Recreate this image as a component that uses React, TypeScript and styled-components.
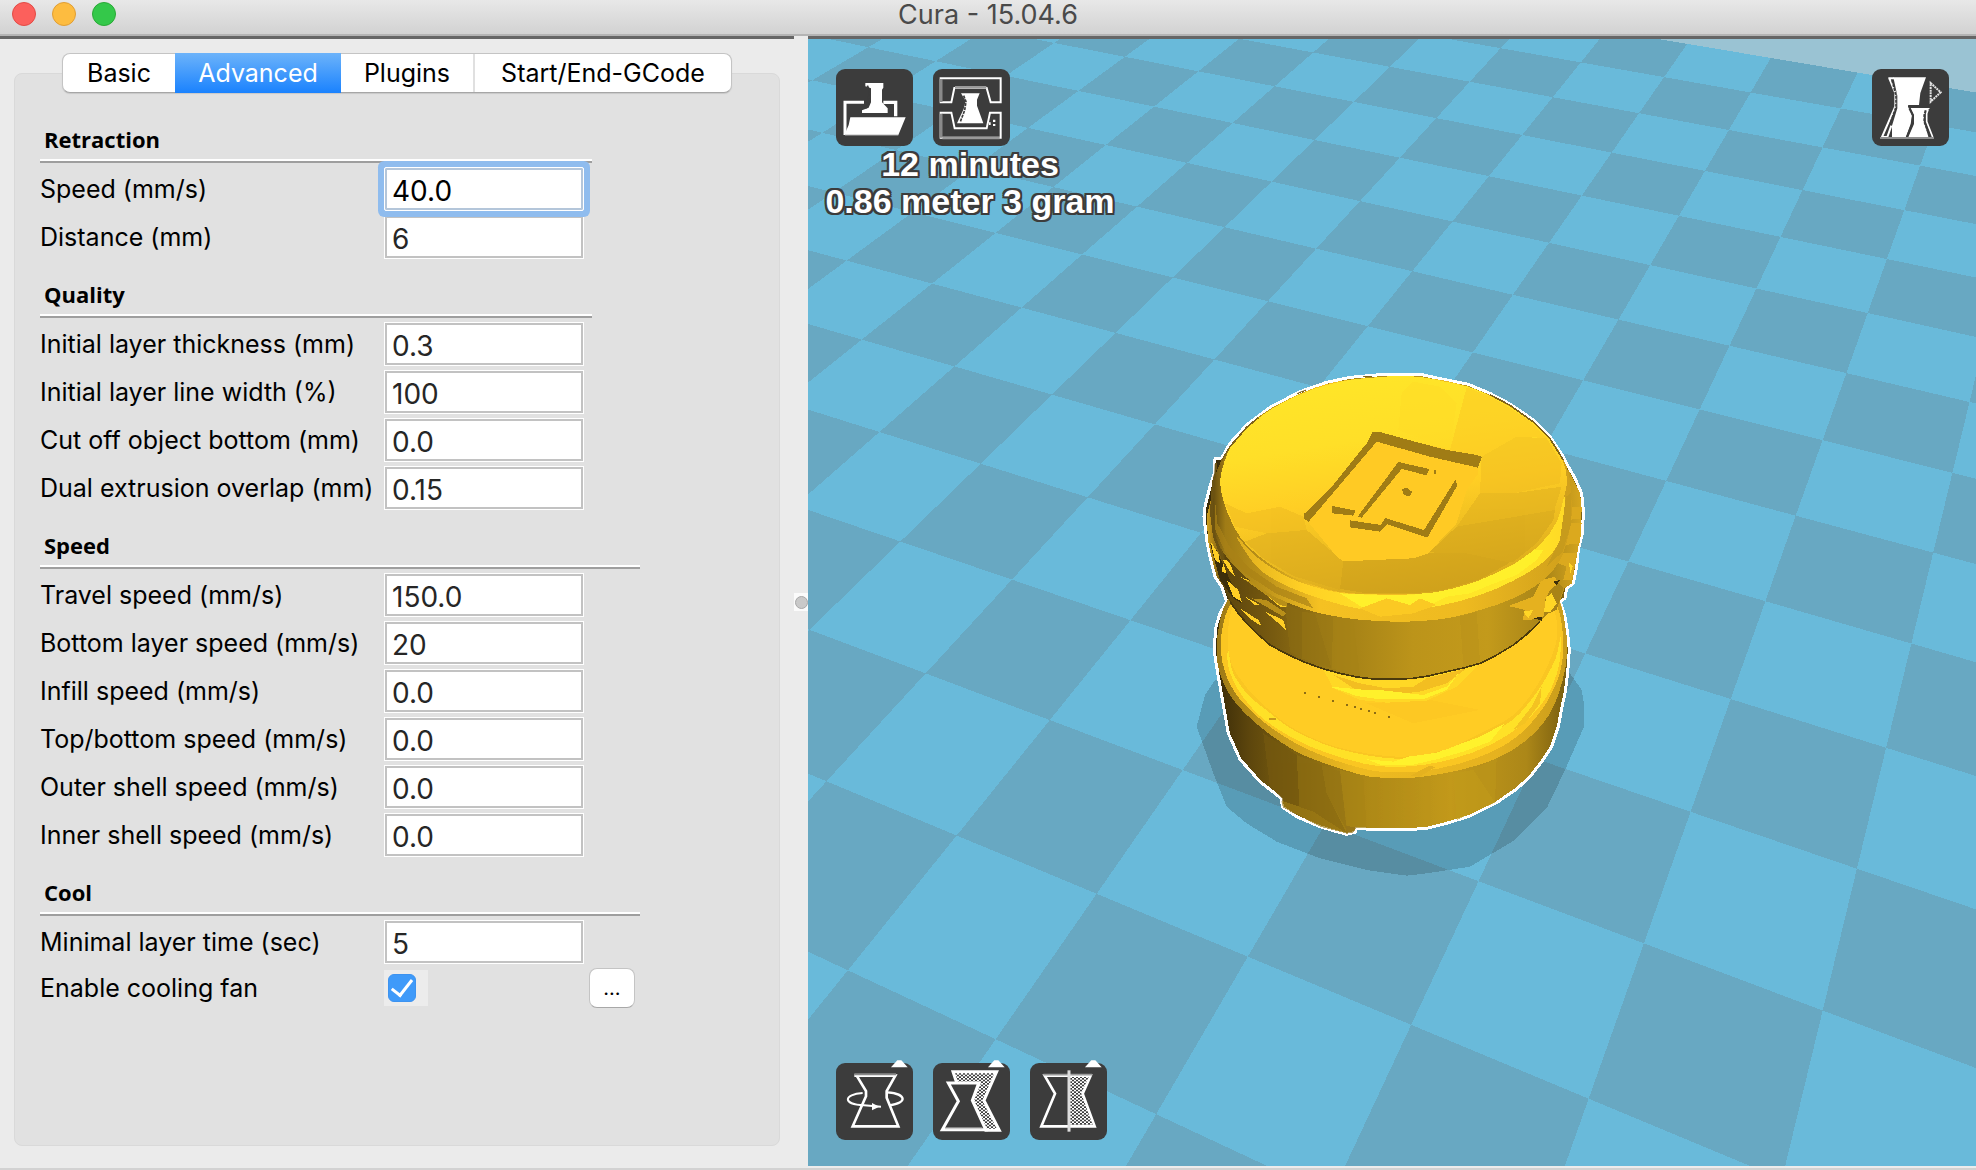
import React, { useId, useState } from "react";
import styled, { createGlobalStyle, css } from "styled-components";

const GlobalStyle = createGlobalStyle`
  * { box-sizing: border-box; }
  body {
    margin: 0;
    background: #ebebeb;
    color: #000;
    font-family: Inter, Roboto, "Liberation Sans", sans-serif;
    font-size: 25px;
  }
  button, input { font: inherit; color: inherit; }
`;

/* ---------- window frame ---------- */

const Window = styled.div`
  display: flex;
  flex-direction: column;
  height: 100vh;
`;

const TitleBar = styled.header`
  display: grid;
  grid-template-columns: 1fr auto 1fr;
  height: 36px;
  padding: 0 12px;
  background: linear-gradient(#e8e8e8, #d2d2d2);
  border-bottom: 2px solid #b4b4b4;
`;

const Lights = styled.div`
  display: flex;
  gap: 16px;
  padding-top: 2px;
`;

const Light = styled.button<{ $fill: string; $edge: string }>`
  width: 24px;
  height: 24px;
  padding: 0;
  border: 1px solid ${(p) => p.$edge};
  border-radius: 50%;
  background: ${(p) => p.$fill};
`;

const Title = styled.h1`
  margin: 0;
  font-size: 27px;
  font-weight: 400;
  line-height: 30px;
  color: #4a4a4a;
`;

const Body = styled.div`
  flex: 1;
  min-height: 0;
  display: grid;
  grid-template-columns: 794px 14px minmax(0, 1fr);
  border-bottom: 2px solid #d2d2d2;
`;

const Pane = styled.div`
  display: flex;
  flex-direction: column;
  padding: 14px;
  padding-bottom: 22px;
  border-top: 3px solid #666;
`;

const Splitter = styled.div`
  display: grid;
  place-items: center;
`;

const Grip = styled.span`
  display: grid;
  place-items: center;
  width: 14px;
  height: 18px;
  background: #fbfbfb;
  &::after {
    content: "";
    width: 11px;
    height: 11px;
    border: 1px solid #a8a8a8;
    border-radius: 50%;
    background: #c9c9c9;
  }
`;

/* ---------- settings panel ---------- */

const Tabs = styled.div`
  display: flex;
  align-self: center;
  height: 40px;
  margin-bottom: -20px;
  border: 1px solid #c4c4c4;
  border-bottom-color: #a6a6a6;
  border-radius: 8px;
  background: #fff;
  box-shadow: 0 1px 1px #c8c8c8;
  z-index: 1;
`;

const Tab = styled.button<{ $active: boolean; $width: number }>`
  width: ${(p) => p.$width}px;
  padding: 0;
  border: 0;
  background: transparent;
  & + button { border-left: 2px solid #e0e0e0; }
  ${(p) =>
    p.$active &&
    css`
      &&& {
        margin: -1px 0;
        border-left: 0;
        color: #fff;
        background: linear-gradient(#6cb3fa, #1a82fe);
      }
      && + button { border-left: 0; }
    `}
`;

const Group = styled.form`
  flex: 1;
  display: flex;
  flex-direction: column;
  gap: 21px;
  padding: 51px 25px 0;
  border: 1px solid #d9d9d9;
  border-radius: 8px;
  background: #e1e1e1;
`;

const Section = styled.section<{ $wide?: boolean }>`
  display: flex;
  flex-direction: column;
  gap: 4px;
  width: ${(p) => (p.$wide ? 600 : 552)}px;
`;

const Heading = styled.h2`
  margin: 0;
  padding: 0 0 8px 4px;
  font-family: "Open Sans", "Noto Sans", sans-serif;
  font-size: 22px;
  font-weight: 700;
  line-height: 28px;
  border-bottom: 2px solid #9e9e9e;
  box-shadow: inset 0 -2px #fff;
`;

const Row = styled.div<{ $short?: boolean }>`
  display: grid;
  grid-template-columns: 344px 200px 1fr;
  align-items: center;
  height: ${(p) => (p.$short ? 40 : 44)}px;
`;

const Label = styled.label`
  white-space: nowrap;
`;

const Field = styled.input`
  width: 100%;
  height: 44px;
  padding: 4px 7px 0;
  border: 1px solid #fff;
  border-radius: 0;
  background: #fff;
  color: #262626;
  font-size: 28px;
  outline: none;
  box-shadow: inset 0 0 0 2px #c2c2c2;
  &:focus {
    position: relative;
    color: #000;
    border-radius: 2px;
    box-shadow: inset 0 0 0 2px #b4c6da, 0 0 0 6px #8fbcee;
  }
`;

const CheckCell = styled.span`
  display: flex;
  align-items: center;
  width: 44px;
  height: 36px;
  padding-left: 4px;
  background: #ececec;
`;

const Check = styled.input`
  appearance: none;
  display: grid;
  place-items: center;
  width: 28px;
  height: 28px;
  margin: 0;
  border: 1px solid #b8b8b8;
  border-radius: 6px;
  background: #fff;
  &:checked {
    border-color: #3d93f0;
    background: #3f9af9;
  }
  &:checked::after {
    content: "";
    width: 9px;
    height: 18px;
    margin-bottom: 5px;
    border: solid #fff;
    border-width: 0 3px 3px 0;
    transform: rotate(38deg);
  }
`;

const MoreButton = styled.button`
  width: 46px;
  height: 40px;
  margin-left: 5px;
  padding: 0;
  border: 1px solid #c4c4c4;
  border-bottom-color: #a8a8a8;
  border-radius: 8px;
  background: #fff;
  font-size: 20px;
`;

/* ---------- 3D view ---------- */

const View = styled.main`
  position: relative;
  overflow: hidden;
  border-top: 3px solid #666;
  border-bottom: 2px solid #ececec;
  background: #9ac3d3;
`;

const Scene = styled.svg`
  position: absolute;
  inset: 0;
  width: 100%;
  height: 100%;
`;

const Overlay = styled.div`
  position: relative;
  display: flex;
  flex-direction: column;
  justify-content: space-between;
  height: 100%;
  padding: 30px 27px 26px 28px;
`;

const Bar = styled.div`
  display: flex;
  justify-content: space-between;
`;

const Tools = styled.div`
  display: flex;
  gap: 20px;
`;

const ToolButton = styled.button`
  width: 77px;
  height: 77px;
  padding: 0;
  border: 0;
  border-radius: 9px;
  background: #3c3c3c;
  svg {
    display: block;
    width: 100%;
    height: 100%;
    overflow: visible;
  }
`;

const Estimate = styled.p`
  width: 290px;
  margin: 0 0 0 -11px;
  font-family: "Liberation Sans", Arial, sans-serif;
  font-size: 34px;
  font-weight: 700;
  line-height: 37px;
  text-align: center;
  white-space: nowrap;
  color: #fff;
  text-shadow: 2px 0 #3c3c3c, -2px 0 #3c3c3c, 0 2px #3c3c3c, 0 -2px #3c3c3c,
    2px 2px #3c3c3c, -2px 2px #3c3c3c, 2px -2px #3c3c3c, -2px -2px #3c3c3c;
`;

/* ---------- floor: checkerboard in perspective ---------- */

const ORIGIN = [1588.7, 1098.7];
const VANISH_I = [2252, -769];
const VANISH_J = [-2735, -702];

function project(i: number, j: number) {
  const a = i * 0.09076;
  const b = (j - 5) * -0.0428;
  const w = 1 + a + b;
  const x = (ORIGIN[0] + a * VANISH_I[0] + b * VANISH_J[0]) / w;
  const y = (ORIGIN[1] + a * VANISH_I[1] + b * VANISH_J[1]) / w;
  return `${x.toFixed(1)} ${y.toFixed(1)}`;
}

function quad(i0: number, i1: number, j0: number, j1: number) {
  return `M${project(i0, j0)}L${project(i1, j0)}L${project(i1, j1)}L${project(i0, j1)}Z`;
}

function darkTiles() {
  let d = "";
  for (let i = -4; i < 13; i++) {
    for (let j = -16; j < 9; j++) {
      if ((i + j) & 1) d += quad(i, i + 1, j, j + 1);
    }
  }
  return d;
}

/* Rounds a closed polygon into a curve that still passes through each of its corners. */
function smooth(polygon: string) {
  const n = (polygon.match(/-?\d+/g) || []).map(Number);
  const count = n.length / 2;
  const at = (k: number) => {
    const m = (k + count) % count;
    return [n[m * 2], n[m * 2 + 1]];
  };
  let d = `M${at(0).join(" ")}`;
  for (let k = 0; k < count; k++) {
    const [p, a, b, q] = [at(k - 1), at(k), at(k + 1), at(k + 2)];
    d += `C${(a[0] + (b[0] - p[0]) / 6).toFixed(1)} ${(a[1] + (b[1] - p[1]) / 6).toFixed(1)} ${(b[0] - (q[0] - a[0]) / 6).toFixed(1)} ${(b[1] - (q[1] - a[1]) / 6).toFixed(1)} ${b[0]} ${b[1]}`;
  }
  return d + "Z";
}

const SILHOUETTE =
  "M105 326L125 325L150 280L200 225L270 172L360 125L440 97L510 82L590 75L730 75L790 88L865 103L930 130L990 162L1060 210L1110 260L1150 320L1165 350L1185 385L1205 430L1210 480L1208 545L1195 600L1190 650L1180 700L1160 715L1155 745L1140 755L1155 800L1163 850L1168 900L1163 970L1155 1030L1145 1075L1135 1130L1115 1190L1085 1235L1050 1280L1010 1317L950 1358L870 1398L800 1420L740 1435L670 1440L600 1440L530 1435L525 1447L500 1453L470 1445L420 1430L350 1400L308 1372L303 1345L240 1295L180 1228L145 1150L130 1065L115 980L102 900L108 830L120 790L140 755L125 710L105 680L90 620L80 570L72 500L75 470L90 410L103 370Z";

const LOWER_RIM = smooth(
  "M140 755L118 820L110 900L120 970L160 1050L240 1130L340 1200L420 1235L500 1262L570 1280L645 1284L720 1281L840 1260L950 1225L1040 1170L1110 1090L1148 990L1162 900L1156 830L1140 755L1110 730L1000 730L300 730L180 730"
);

const LOWER_FACE = smooth(
  "M148 770L128 830L122 900L138 975L178 1045L250 1115L340 1176L430 1218L520 1248L610 1266L720 1264L830 1243L940 1203L1025 1148L1092 1070L1136 980L1150 900L1146 830L1132 770L1100 735L1000 730L300 730L185 735"
);

const LOWER_BAND = smooth(
  "M145 900L160 970L205 1035L265 1085L340 1140L460 1192L600 1222L700 1224L800 1206L900 1164L1000 1108L1075 1020L1125 930L1142 860L1136 950L1100 1040L1030 1120L930 1185L820 1226L700 1248L580 1246L450 1212L340 1165L240 1098L175 1020L145 950"
);

const LOWER_FLAT = smooth(
  "M158 770L144 850L154 940L202 1015L262 1075L340 1135L460 1188L600 1216L700 1218L800 1198L890 1155L1000 1095L1075 1000L1122 900L1132 830L1118 770L1090 740L1000 730L300 730L190 740"
);

const UPPER_SIDE =
  "M95 440L80 500L84 570L94 620L110 680L130 710L150 755L175 790L200 820L235 854L270 885L320 912L370 935L425 955L480 970L530 981L580 987L640 988L700 985L750 977L800 965L850 954L900 940L950 915L1000 885L1040 853L1080 815L1140 755L1153 715L1176 700L1186 645L1200 560L1205 480L1200 430L1165 360Z";

const UPPER_RIM = smooth(
  "M125 330L97 420L94 490L104 550L132 610L190 675L280 738L390 782L490 803L580 812L680 815L800 805L900 780L1000 745L1090 690L1145 620L1172 520L1174 440L1160 350L1110 265L1030 192L930 136L830 100L730 84L590 82L440 102L300 160L200 230"
);

const UPPER_TOP = smooth(
  "M122 380L127 440L150 505L185 568L245 625L330 678L430 715L490 727L560 732L700 732L790 722L900 690L1000 642L1080 584L1130 515L1152 440L1161 390L1148 330L1108 266L1060 216L990 170L930 138L865 110L790 94L730 82L660 78L590 82L510 90L440 105L360 133L270 180L200 234L150 294"
);

const UPPER_BAND = smooth(
  "M170 560L235 625L330 684L430 718L490 729L560 733L700 733L790 723L900 691L1000 643L1080 584L1130 515L1152 440L1158 500L1138 575L1090 636L1000 692L900 735L790 765L680 782L560 780L440 752L330 712L235 655"
);

function Model() {
  return (
    <g transform="translate(1180 350) scale(0.33333)" shapeRendering="crispEdges">
      <path
        d="M105 990L75 1035L50 1130L75 1200L100 1270L140 1370L200 1420L290 1475L420 1525L560 1560L680 1577L740 1570L870 1550L1005 1470L1100 1375L1155 1260L1212 1130L1212 1060L1205 1020L1170 970Z"
        fill="#000"
        opacity="0.16"
      />
      <path d={SILHOUETTE} fill="url(#sideLow)" stroke="#fff" strokeWidth="9" />
      <g clipPath="url(#outline)">
        {/* lower drum facets */}
        <g opacity="0.7">
          <path d="M250 1150L270 1310L305 1345L308 1372L360 1400L350 1215Z" fill="#75590f" />
          <path d="M350 1215L360 1400L500 1450L440 1330L425 1245Z" fill="#8b6c12" />
          <path d="M425 1245L440 1330L500 1440L480 1265Z" fill="#967615" />
          <path d="M480 1260L500 1430L560 1435L550 1280Z" fill="#a98516" />
          <path d="M300 1350L400 1385L500 1450L420 1430L310 1372Z" fill="#9c7a15" />
          <path d="M498 1428L530 1432L520 1447L498 1452Z" fill="#94731a" />
          <path d="M820 1270L830 1410L945 1358L880 1260Z" fill="#c19a1b" />
          <path d="M880 1260L945 1358L950 1225Z" fill="#bb951a" />
        </g>
        {/* lower top face */}
        <path d={LOWER_RIM} fill="url(#rimLow)" />
        <path d={LOWER_FACE} fill="#fac622" />
        <path d={LOWER_BAND} fill="#ffe127" />
        <path
          d="M560 1228L640 1235L700 1215L770 1208L900 1160L975 1120L930 1175L850 1205L770 1228L690 1246L600 1244Z"
          fill="#fff22c"
        />
        <path d={LOWER_FLAT} fill="#ffcc24" />
        <path d="M700 1120L900 1080L750 1050L560 1060Z" fill="#fdc823" />
        <path d="M420 940L460 1015L540 1050L620 1058L740 1052L830 1010L900 940L700 990L560 985Z" fill="#ffd826" />
        <path d="M460 975L520 1015L620 1035L720 1025L800 1000L860 955L740 985L700 1010L620 1015L540 1000Z" fill="#f3be21" />
        <path d="M450 1010L560 1020L600 1020L730 1035L800 1010L835 970L800 1020L730 1048L600 1048L530 1038Z" fill="#fff12b" />
        <path d="M1055 1070L1085 1010L1080 1060L1035 1120L1000 1140Z" fill="#f4c322" />
        <path d="M690 1278L750 1246L765 1252L720 1280Z" fill="#e5b21f" />
        <path d="M373 1028h6m36 12h6m36 12h6m36 12h6m18 6h6m12 6h6m18 6h6m12 6h6m36 12h6" stroke="#8d6d14" strokeWidth="6" fill="none" />
        <path d="M268 1106h20" stroke="#c9991c" strokeWidth="6" />

        {/* upper drum side */}
        <path d={UPPER_SIDE} fill="url(#sideUp)" />
        <path
          d="M150 755L175 790L200 820L235 854L270 885L320 912L370 935L425 955L480 970L530 981L580 987L640 988L700 985L750 977L800 965L850 954L900 940L950 915L1000 885L1040 853L1080 815"
          fill="none"
          stroke="#4a390c"
          strokeWidth="5"
        />
        <g opacity="0.6">
          <path d="M315 760L330 905L365 925L365 785Z" fill="#8b6c12" />
          <path d="M365 785L365 925L455 955L405 790Z" fill="#967514" />
          <path d="M405 790L455 955L460 800Z" fill="#9d7b15" />
          <path d="M460 800L455 955L540 978L520 808Z" fill="#a78316" />
          <path d="M840 800L850 950L900 935L890 785Z" fill="#bb931a" />
        </g>
        {/* relief on the left and right of the drum */}
        <path d="M90 580L110 600L150 690L185 760L160 745L120 690Z" fill="#3d2f0b" />
        <path d="M92 575L115 610L120 640L105 630ZM120 615L150 640L165 680L150 665ZM130 640L140 670L125 665ZM140 690L175 720L185 755L160 740ZM180 680L240 705L320 770L300 770L240 720ZM195 740L240 765L225 765ZM180 775L235 810L245 828L215 810ZM255 785L310 810L320 845L290 815Z" fill="#ffce24" />
        <path d="M195 690L300 765L320 770L320 740L240 700ZM215 745L310 800L320 790L260 750Z" fill="#b88f19" />
        <path d="M1150 470L1205 470L1203 505L1165 510ZM1160 520L1205 518L1200 580L1155 585ZM1140 608L1190 608L1176 690L1150 690L1160 650L1135 640Z" fill="#dba91e" />
        <path d="M985 768L1060 740L1085 690L1125 680L1135 705L1105 735L1090 800L1050 810L1028 810L1035 780Z" fill="#e5b11f" />
        <path d="M1095 750L1110 720L1135 700L1150 715L1130 780L1095 795Z" fill="#a98317" />
        <path d="M1098 742L1115 730L1130 760L1112 785L1092 785ZM1168 640L1178 650L1170 675ZM1030 785L1060 780L1045 805Z" fill="#ffd626" />
        <path d="M1120 695L1140 690L1130 705ZM1060 805L1085 800L1085 812Z" fill="#3d2f0b" />

        {/* rounded rim */}
        <path d={UPPER_RIM} fill="url(#rim)" />
        <path d="M104 440L112 520L150 592L210 655L290 710L380 745L400 775L290 732L195 670L135 605L106 540Z" fill="#a98217" opacity="0.7" />
        <path d={UPPER_BAND} fill="url(#band)" />
        <path d="M480 730L560 734L700 734L790 722L900 690L1000 645L1060 600L1090 600L1070 630L1010 675L930 705L870 730L800 740L760 760L680 765L620 745L560 780Z" fill="#fff02b" />
        <path d="M540 775L620 745L690 765L720 745L770 765L700 790L600 800Z" fill="#fbc923" />
        <path d="M1158 440L1172 430L1174 520L1148 605L1100 650L1140 570Z" fill="#c79b1c" />

        {/* top face with faint facets */}
        <path d={UPPER_TOP} fill="url(#top)" />
        <g opacity="0.5">
          <path d="M665 130L655 240L810 300L830 160L780 110L700 95Z" fill="#ffdb26" />
          <path d="M860 112L810 300L905 320L1040 260L1100 265L1050 214L990 174L930 140Z" fill="#fbc823" />
          <path d="M905 320L900 430L1000 430L1140 400L1145 340L1100 265L1010 260Z" fill="#f0bc20" />
          <path d="M900 430L830 530L1000 520L1120 490L1145 410L1000 430Z" fill="#deae1e" />
          <path d="M830 530L750 605L900 640L1000 636L1070 580L1120 510L1125 480Z" fill="#cfa11c" />
          <path d="M490 634L470 715L560 730L700 730L790 720L900 688L990 638L860 610L745 610Z" fill="#c99c1b" />
          <path d="M380 540L260 550L195 575L250 625L340 678L480 720L490 634Z" fill="#d9a91e" />
          <path d="M135 460L165 530L260 550L380 540L370 500L300 470L200 490Z" fill="#edb920" />
          <path d="M640 650L760 665L720 700L600 725L490 720Z" fill="#c99c1b" />
        </g>
        <path d="M380 510L470 620L490 634L700 625L745 610L830 520L860 420L895 370L890 320L600 250L380 490Z" fill="#ffca24" />

        {/* engraved mark */}
        <g fill="#a07c15">
          <path d="M577 246L600 246L690 271L800 300L880 313L906 320L894 353L750 320L590 275L385 516L372 505L372 492L450 417L560 280Z" />
          <path d="M655 336L748 357L740 376L665 357L545 503L533 500Z" />
          <path d="M762 360h6v12h-6zM680 413L696 425L690 438L672 436L666 418Z" />
          <path d="M456 468L526 482L520 497L456 490ZM510 511L603 525L615 504L732 540L826 390L833 405L742 563L622 523L600 545L510 532Z" />
        </g>
        {/* dark edge along the outline */}
        <path d="M125 332L150 290L200 232L235 203M350 130L378 120M548 80H575M930 134L990 166L1060 216L1110 266L1150 330" fill="none" stroke="#80631a" strokeWidth="5" />
        <path d="M108 340L98 420L94 490L103 560L130 630" fill="none" stroke="#6b5212" strokeWidth="8" />
      </g>
    </g>
  );
}

function ViewScene() {
  return (
    <Scene viewBox="808 39 1168 1127" preserveAspectRatio="xMidYMid slice" aria-hidden="true">
      <defs>
        <clipPath id="outline">
          <path d={SILHOUETTE} />
        </clipPath>
        <linearGradient id="sideLow" x1="0" x2="1" y1="0" y2="0">
          <stop offset="0.03" stopColor="#3a2b08" />
          <stop offset="0.12" stopColor="#5d460d" />
          <stop offset="0.25" stopColor="#80630f" />
          <stop offset="0.42" stopColor="#ad8817" />
          <stop offset="0.65" stopColor="#c2991b" />
          <stop offset="0.85" stopColor="#ac8718" />
          <stop offset="0.95" stopColor="#7c6010" />
        </linearGradient>
        <linearGradient id="sideUp" x1="0" x2="1" y1="0" y2="0">
          <stop offset="0" stopColor="#d2a11d" />
          <stop offset="0.05" stopColor="#5c450d" />
          <stop offset="0.18" stopColor="#785b10" />
          <stop offset="0.35" stopColor="#a27f16" />
          <stop offset="0.55" stopColor="#bc941a" />
          <stop offset="0.75" stopColor="#c39a1b" />
          <stop offset="0.9" stopColor="#a88418" />
          <stop offset="1" stopColor="#d6a61e" />
        </linearGradient>
        <linearGradient id="rimLow" x1="0" x2="1" y1="0" y2="0">
          <stop offset="0" stopColor="#9c7916" />
          <stop offset="0.15" stopColor="#c4981b" />
          <stop offset="0.4" stopColor="#eebb20" />
          <stop offset="0.8" stopColor="#e5b21f" />
          <stop offset="1" stopColor="#c99c1b" />
        </linearGradient>
        <linearGradient id="rim" x1="0" x2="1" y1="0" y2="0">
          <stop offset="0" stopColor="#5d460e" />
          <stop offset="0.04" stopColor="#a07c16" />
          <stop offset="0.15" stopColor="#bd931a" />
          <stop offset="0.3" stopColor="#f5c122" />
          <stop offset="0.7" stopColor="#eeba20" />
          <stop offset="1" stopColor="#cf9f1c" />
        </linearGradient>
        <linearGradient id="band" x1="0" x2="1" y1="0" y2="0">
          <stop offset="0" stopColor="#e0ae1e" />
          <stop offset="0.2" stopColor="#ffd025" />
          <stop offset="0.45" stopColor="#ffe328" />
          <stop offset="0.85" stopColor="#ffe728" />
          <stop offset="1" stopColor="#ffd926" />
        </linearGradient>
        <linearGradient id="top" x1="0.3" x2="0.55" y1="0" y2="1">
          <stop offset="0" stopColor="#ffe629" />
          <stop offset="0.3" stopColor="#ffdf28" />
          <stop offset="0.55" stopColor="#ffce25" />
          <stop offset="1" stopColor="#d9a91d" />
        </linearGradient>
      </defs>
      <path d={quad(-4, 13, -16, 9)} fill="#69bada" shapeRendering="crispEdges" />
      <path d={darkTiles()} fill="#68a8c2" shapeRendering="crispEdges" />
      <Model />
    </Scene>
  );
}

/* ---------- tool icons ---------- */

const DARK = "#3c3c3c";

function LoadIcon() {
  return (
    <svg viewBox="0 0 231 231" fill="none">
      <path d="M84 100H27V198" stroke="#fff" strokeWidth="9" />
      <path d="M142 100H179V142" stroke="#fff" strokeWidth="10" />
      <path d="M43 145H209L187 198H25L38 168Z" fill="#fff" />
      <path d="M88 42H142V56L138 62V100L155 118V132H78V124L98 116L105 100V58L88 52Z" fill="#fff" />
      <path d="M94 50L101 66L97 90L90 118" stroke={DARK} strokeWidth="5" strokeDasharray="8 3" />
      <path d="M27 199H187" stroke="#777" strokeWidth="4" />
    </svg>
  );
}

function PrintIcon() {
  return (
    <svg viewBox="0 0 231 231" fill="none">
      <path d="M23 28H203V100H173L161 57H64L55 100H23Z" stroke="#fff" strokeWidth="6" />
      <path d="M23 131H55L65 178H161L171 131H203V206H23Z" stroke="#fff" strokeWidth="6" />
      <path d="M24 30V99M24 134V206" stroke="#8a8a8a" strokeWidth="9" />
      <path d="M28 207H200M66 55H160" stroke="#9a9a9a" strokeWidth="8" />
      <path d="M84 73H140L132 92V110L151 163H72L92 120L98 96Z" fill="#fff" />
      <path d="M92 80L99 98L95 124L82 158" stroke={DARK} strokeWidth="5" strokeDasharray="9 3" />
      <path d="M180 152h7v7h-7zM180 165h7v6h-7zM168 160h5v8h-5z" fill="#fff" />
    </svg>
  );
}

function ViewModeIcon() {
  return (
    <svg viewBox="0 0 231 231" fill="none">
      <path d="M64 25H162L145 72L141 108H108L120 140L116 165L101 206H60V170L76 118V80Z" fill="#fff" />
      <path d="M49 28H66M52 28L70 72V112L30 204H46L58 170" stroke="#fff" strokeWidth="6" />
      <path d="M60 34L72 80V114L54 165" stroke={DARK} strokeWidth="5" strokeDasharray="9 3" />
      <path d="M116 117H174L156 136V158L170 206H108L126 165V138Z" fill="#fff" />
      <path d="M108 113H142" stroke={DARK} strokeWidth="6" />
      <path d="M112 118L123 140L120 166L104 206" stroke={DARK} strokeWidth="6" />
      <path d="M168 122L164 134V158L182 204" stroke="#fff" strokeWidth="5" />
      <path d="M161 124L157 138V158L174 204" stroke={DARK} strokeWidth="6" strokeDasharray="9 3" />
      <path d="M24 207H186" stroke="#8f8f8f" strokeWidth="6" />
      <path d="M176 42L206 70L176 98Z" stroke="#e4e4e4" strokeWidth="6" strokeDasharray="6 2" />
    </svg>
  );
}

const Pointer = () => <path d="M165 13L184 -8H196L215 13Z" fill="#fff" />;

function RotateIcon() {
  return (
    <svg viewBox="0 0 231 231" fill="none">
      <Pointer />
      <path d="M55 38H178L152 84V104L187 190H50L90 100V84L62 38" stroke="#fff" strokeWidth="8" />
      <path d="M55 34H180" stroke="#8a8a8a" strokeWidth="6" />
      <path d="M80 90C22 94 18 124 84 127L135 131" stroke="#fff" strokeWidth="6" />
      <path d="M154 88C212 92 216 120 160 127" stroke="#fff" strokeWidth="7" />
      <path d="M108 120L130 131L108 142Z" fill="#fff" />
    </svg>
  );
}

function Hatch({ id }: { id: string }) {
  return (
    <pattern id={id} width="12" height="10" patternUnits="userSpaceOnUse">
      <rect width="12" height="10" fill={DARK} />
      <path d="M0 0h6v5h-6zM6 5h6v5h-6z" fill="#fff" />
    </pattern>
  );
}

function ScaleIcon() {
  return (
    <svg viewBox="0 0 231 231" fill="none">
      <defs>
        <Hatch id="hatchScale" />
      </defs>
      <Pointer />
      <path d="M60 26H191L153 112L199 202H158L118 112L138 62H72Z" fill="url(#hatchScale)" stroke="#fff" strokeWidth="9" />
      <path d="M46 60H137L118 112L158 200H28L76 115Z" fill={DARK} stroke="#fff" strokeWidth="9" />
      <path d="M36 196H148" stroke="#cfcfcf" strokeWidth="5" />
    </svg>
  );
}

function MirrorIcon() {
  return (
    <svg viewBox="0 0 231 231" fill="none">
      <defs>
        <Hatch id="hatchMirror" />
      </defs>
      <Pointer />
      <path d="M117 38H182L158 92L192 190H117Z" fill="url(#hatchMirror)" />
      <path d="M44 38H182L158 92L194 190H34L75 92Z" stroke="#fff" strokeWidth="8" />
      <path d="M40 35H186" stroke="#9a9a9a" strokeWidth="5" />
      <path d="M117 22V206" stroke="#ddd" strokeWidth="9" />
    </svg>
  );
}

/* ---------- app ---------- */

const TABS = [
  { name: "Basic", width: 112 },
  { name: "Advanced", width: 166 },
  { name: "Plugins", width: 132 },
  { name: "Start/End-GCode", width: 258 },
];

const SECTIONS = [
  {
    title: "Retraction",
    wide: false,
    rows: [
      ["Speed (mm/s)", "40.0"],
      ["Distance (mm)", "6"],
    ],
  },
  {
    title: "Quality",
    wide: false,
    rows: [
      ["Initial layer thickness (mm)", "0.3"],
      ["Initial layer line width (%)", "100"],
      ["Cut off object bottom (mm)", "0.0"],
      ["Dual extrusion overlap (mm)", "0.15"],
    ],
  },
  {
    title: "Speed",
    wide: true,
    rows: [
      ["Travel speed (mm/s)", "150.0"],
      ["Bottom layer speed (mm/s)", "20"],
      ["Infill speed (mm/s)", "0.0"],
      ["Top/bottom speed (mm/s)", "0.0"],
      ["Outer shell speed (mm/s)", "0.0"],
      ["Inner shell speed (mm/s)", "0.0"],
    ],
  },
  { title: "Cool", wide: true, rows: [["Minimal layer time (sec)", "5"]] },
];

function Setting({ label, initial, focused }: { label: string; initial: string; focused: boolean }) {
  const id = useId();
  const [value, setValue] = useState(initial);
  return (
    <Row>
      <Label htmlFor={id}>{label}</Label>
      <Field id={id} type="text" value={value} autoFocus={focused} onChange={(e) => setValue(e.target.value)} />
    </Row>
  );
}

function FanSetting() {
  const id = useId();
  const [on, setOn] = useState(true);
  return (
    <Row $short>
      <Label htmlFor={id}>Enable cooling fan</Label>
      <CheckCell>
        <Check id={id} type="checkbox" checked={on} onChange={(e) => setOn(e.target.checked)} />
      </CheckCell>
      <MoreButton type="button">...</MoreButton>
    </Row>
  );
}

export default function App() {
  const [tab, setTab] = useState("Advanced");
  return (
    <>
      <GlobalStyle />
      <Window>
        <TitleBar>
          <Lights>
            <Light aria-label="Close" $fill="#fc605c" $edge="#e24b45" />
            <Light aria-label="Minimize" $fill="#fdbc40" $edge="#e09e35" />
            <Light aria-label="Zoom" $fill="#34c84a" $edge="#2aa936" />
          </Lights>
          <Title>Cura - 15.04.6</Title>
        </TitleBar>
        <Body>
          <Pane>
            <Tabs role="tablist">
              {TABS.map((t) => (
                <Tab
                  key={t.name}
                  type="button"
                  role="tab"
                  aria-selected={tab === t.name}
                  $active={tab === t.name}
                  $width={t.width}
                  onClick={() => setTab(t.name)}
                >
                  {t.name}
                </Tab>
              ))}
            </Tabs>
            <Group onSubmit={(e) => e.preventDefault()}>
              {SECTIONS.map((s) => (
                <Section key={s.title} $wide={s.wide}>
                  <Heading>{s.title}</Heading>
                  {s.rows.map(([label, value]) => (
                    <Setting key={label} label={label} initial={value} focused={label === "Speed (mm/s)"} />
                  ))}
                  {s.title === "Cool" && <FanSetting />}
                </Section>
              ))}
            </Group>
          </Pane>
          <Splitter>
            <Grip />
          </Splitter>
          <View>
            <ViewScene />
            <Overlay>
              <div>
                <Bar>
                  <Tools>
                    <ToolButton aria-label="Load"><LoadIcon /></ToolButton>
                    <ToolButton aria-label="Print"><PrintIcon /></ToolButton>
                  </Tools>
                  <ToolButton aria-label="View mode"><ViewModeIcon /></ToolButton>
                </Bar>
                <Estimate>
                  12 minutes
                  <br />
                  0.86 meter 3 gram
                </Estimate>
              </div>
              <Tools>
                <ToolButton aria-label="Rotate"><RotateIcon /></ToolButton>
                <ToolButton aria-label="Scale"><ScaleIcon /></ToolButton>
                <ToolButton aria-label="Mirror"><MirrorIcon /></ToolButton>
              </Tools>
            </Overlay>
          </View>
        </Body>
      </Window>
    </>
  );
}
